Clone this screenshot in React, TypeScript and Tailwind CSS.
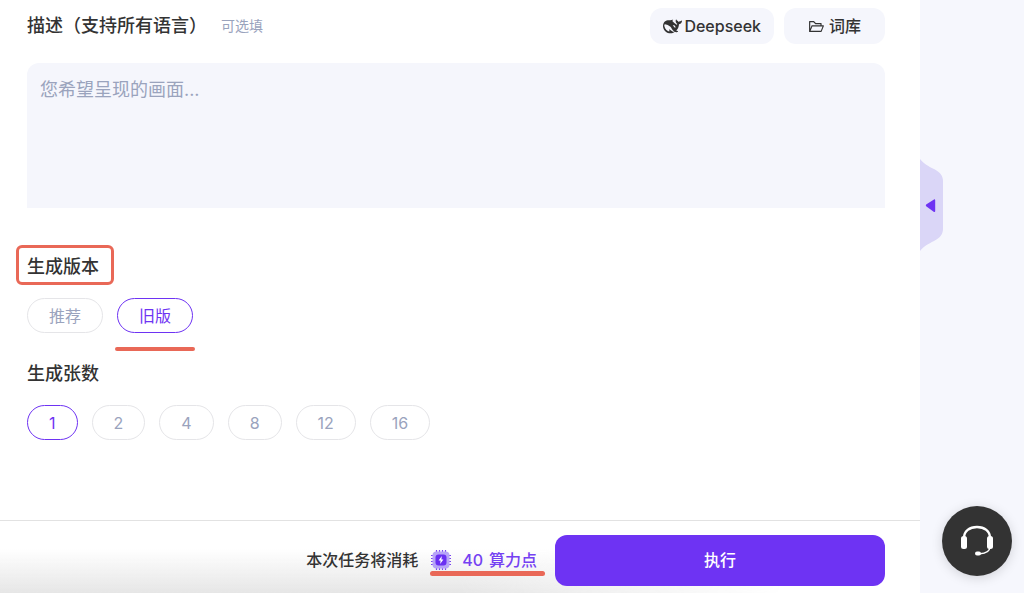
import { useState } from "react";
import { AiOutlineFolderOpen } from "react-icons/ai";
import { clsx } from "clsx";

const versions = ["推荐", "旧版"];
const counts = ["1", "2", "4", "8", "12", "16"];

const DeepseekIcon = () => (
  <svg viewBox="0 0 24 24" className="size-[19px]" fill="currentColor" aria-hidden="true">
    <path d="M23.748 4.482c-.254-.124-.364.113-.512.234-.051.039-.094.09-.137.136-.372.397-.806.657-1.373.626-.829-.046-1.537.214-2.163.848-.133-.782-.575-1.248-1.247-1.548-.352-.156-.708-.311-.955-.65-.172-.241-.219-.51-.305-.774-.055-.16-.11-.323-.293-.35-.2-.031-.278.136-.356.276-.313.572-.434 1.202-.422 1.84.027 1.436.633 2.58 1.838 3.393.137.093.172.187.129.323-.082.28-.18.552-.266.833-.055.179-.137.217-.329.14a5.526 5.526 0 01-1.736-1.18c-.857-.828-1.631-1.742-2.597-2.458a11.365 11.365 0 00-.689-.471c-.985-.957.13-1.743.388-1.836.27-.098.093-.432-.779-.428-.872.004-1.67.295-2.687.684a3.055 3.055 0 01-.465.137 9.597 9.597 0 00-2.883-.102c-1.885.21-3.39 1.102-4.497 2.623C.082 8.606-.231 10.684.152 12.85c.403 2.284 1.569 4.175 3.36 5.653 1.858 1.533 3.997 2.284 6.438 2.14 1.482-.085 3.133-.284 4.994-1.86.47.234.962.327 1.78.397.63.059 1.236-.03 1.705-.128.735-.156.684-.837.419-.961-2.155-1.004-1.682-.595-2.113-.926 1.096-1.296 2.746-2.642 3.392-7.003.05-.347.007-.565 0-.845-.004-.17.035-.237.23-.256a4.173 4.173 0 001.545-.475c1.396-.763 1.96-2.015 2.093-3.517.02-.23-.004-.467-.247-.588zM11.581 18c-2.089-1.642-3.102-2.183-3.52-2.16-.392.024-.321.471-.235.763.09.288.207.486.371.739.114.167.192.416-.113.603-.673.416-1.842-.14-1.897-.167-1.361-.802-2.5-1.86-3.301-3.307-.774-1.393-1.224-2.887-1.298-4.482-.02-.386.093-.522.477-.592a4.696 4.696 0 011.529-.039c2.132.312 3.946 1.265 5.468 2.774.868.86 1.525 1.887 2.202 2.891.72 1.066 1.494 2.082 2.48 2.914.348.292.625.514.891.677-.802.09-2.14.11-3.054-.614zm1-6.44a.306.306 0 01.415-.287.302.302 0 01.2.288.306.306 0 01-.31.307.303.303 0 01-.304-.308zm3.11 1.596c-.2.081-.399.151-.59.16a1.245 1.245 0 01-.798-.254c-.274-.23-.47-.358-.552-.758a1.73 1.73 0 01.016-.588c.07-.327-.008-.537-.239-.727-.187-.156-.426-.199-.688-.199a.559.559 0 01-.254-.078c-.11-.054-.2-.19-.114-.358.028-.054.16-.186.192-.21.356-.202.767-.136 1.146.016.352.144.618.408 1.001.782.391.451.462.576.685.914.176.265.336.537.445.848.067.195-.019.354-.25.452z" />
  </svg>
);

const PowerIcon = () => (
  <svg viewBox="0 0 22 22" className="size-[22px]" aria-hidden="true">
    <path
      d="M6.500 1v20M9.500 1v20M12.500 1v20M15.500 1v20M1 6.500h20M1 9.500h20M1 12.500h20M1 15.500h20"
      stroke="#7a45f2"
      strokeWidth="1.200"
      strokeDasharray="2 16"
    />
    <rect x="2.500" y="2.500" width="17" height="17" rx="4" fill="#b7a4f7" />
    <rect x="5.500" y="5.500" width="11" height="11" rx="3" fill="#6a2ff2" />
    <path d="M11.800 7 8.600 11.500h2L10.200 15l3.200-4.600h-2Z" fill="#fff" />
  </svg>
);

const HeadsetIcon = () => (
  <svg viewBox="0 0 34 32" className="w-[34px] h-[32px]" fill="none" aria-hidden="true">
    <path d="M4 13C4 6 9.500 2 17 2s13 4 13 11" stroke="#fff" strokeWidth="2.400" />
    <rect x="1" y="11" width="6" height="13" rx="2.500" fill="#fff" />
    <rect x="27" y="11" width="6" height="13" rx="2.500" fill="#fff" />
    <path d="M30 22c-.5 4.500-4 6.500-10 6.700" stroke="#fff" strokeWidth="1.600" />
    <rect x="15" y="26.500" width="6" height="4" rx="2" fill="#fff" />
  </svg>
);

type PillProps = {
  name: string;
  value: string;
  checked: boolean;
  onSelect: (value: string) => void;
};

const Pill = ({ name, value, checked, onSelect }: PillProps) => (
  <label
    className={clsx(
      "h-[35px] px-[21px] flex items-center border rounded-full text-base cursor-pointer",
      checked ? "border-[#6e33f3] text-[#6e33f3]" : "border-[#e5e5e8] text-[#9aa3bd]"
    )}
  >
    <input
      type="radio"
      name={name}
      value={value}
      checked={checked}
      onChange={() => onSelect(value)}
      className="sr-only"
    />
    {value}
  </label>
);

export default function App() {
  const [version, setVersion] = useState("旧版");
  const [count, setCount] = useState("1");

  return (
    <div className="min-h-screen flex bg-[#f6f7fd] text-[#333333] font-['Inter','Noto_Sans_CJK_SC',sans-serif]">
      <main className="flex-1 flex flex-col bg-white">
        <div className="flex-1 pl-[27px] pr-[35px] pt-2">
          <div className="flex items-center justify-between">
            <label htmlFor="prompt" className="flex items-center gap-[14px] text-lg font-medium">
              描述（支持所有语言）
              <span className="text-sm font-normal text-[#9aa3bd]">可选填</span>
            </label>
            <div className="flex gap-[10px] text-base font-medium">
              <button type="button" className="h-9 px-[13px] flex items-center gap-[2px] rounded-xl bg-[#f5f6fc]">
                <DeepseekIcon />
                Deepseek
              </button>
              <button type="button" className="h-9 px-6 flex items-center gap-1 rounded-xl bg-[#f5f6fc]">
                <AiOutlineFolderOpen className="size-[17px]" />
                词库
              </button>
            </div>
          </div>

          <textarea
            id="prompt"
            placeholder="您希望呈现的画面..."
            className="block w-full h-[145px] mt-[19px] px-[13px] py-[13px] resize-none rounded-t-xl bg-[#f5f6fc] text-lg outline-none placeholder:text-[#9aa3bd]"
          />

          <fieldset className="mt-[45px]">
            <legend className="relative text-lg font-medium">
              生成版本
              <span className="absolute -left-[11px] -right-[15px] -top-2 -bottom-1 border-3 border-[#e96857] rounded-md" />
            </legend>
            <div className="flex gap-[14px] mt-[17px]">
              {versions.map((item) => (
                <div key={item} className="relative">
                  <Pill name="version" value={item} checked={version === item} onSelect={setVersion} />
                  {version === item && (
                    <span className="absolute -inset-x-[2px] top-[49px] h-1 rounded-full bg-[#e96857]" />
                  )}
                </div>
              ))}
            </div>
          </fieldset>

          <fieldset className="mt-[27px]">
            <legend className="text-lg font-medium">生成张数</legend>
            <div className="flex gap-[14px] mt-[17px]">
              {counts.map((item) => (
                <Pill key={item} name="count" value={item} checked={count === item} onSelect={setCount} />
              ))}
            </div>
          </fieldset>
        </div>

        <footer className="relative h-[73px] pl-[27px] pr-[35px] flex items-center justify-end border-t border-[#e2e2e2]">
          <div className="absolute inset-x-0 bottom-0 h-11 bg-linear-to-t from-[#e6e6e6] to-transparent mask-r-from-50% mask-r-to-85%" />
          <div className="relative flex items-center mt-[6px] text-base font-medium">
            <span>本次任务将消耗</span>
            <span className="relative flex items-center gap-[10px] ml-3 text-[#7541f2]">
              <PowerIcon />
              <span className="flex gap-[6px]">
                <span>40</span>
                <span>算力点</span>
              </span>
              <span className="absolute left-0 -right-2 top-[23px] h-[5px] rounded-full bg-[#e96857]" />
            </span>
          </div>
          <button
            type="button"
            className="relative w-[330px] h-[51px] mt-[6px] ml-[18px] rounded-xl bg-[#6e33f3] text-base font-medium text-white"
          >
            执行
          </button>
        </footer>
      </main>

      <aside className="relative w-[104px]">
        <button type="button" aria-label="收起" className="absolute left-0 top-[159px]">
          <svg viewBox="0 0 23 92" className="w-[23px] h-[92px]">
            <path d="M0 0c4 5 8 7 14 10 6 3 9 7 9 12v48c0 5-3 9-9 12-6 3-10 5-14 10Z" fill="#dad6f7" />
            <path d="M6.500 45.200 14 40.500c.6-.4 1.200 0 1.200.7v11c0 .7-.6 1.100-1.200.7l-7.500-5.300c-.9-.8-.9-1.700 0-2.400Z" fill="#6e33f3" />
          </svg>
        </button>
        <button
          type="button"
          aria-label="客服"
          className="absolute right-3 bottom-[17px] size-[70px] flex items-center justify-center rounded-full bg-[#333333] shadow-[0_2px_12px_rgba(0,0,0,0.15)]"
        >
          <HeadsetIcon />
        </button>
      </aside>
    </div>
  );
}
